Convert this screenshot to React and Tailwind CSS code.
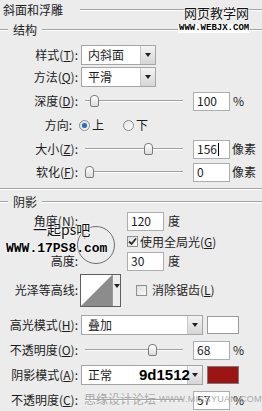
const font = "font-['Noto_Sans_CJK_SC','Noto_Sans',sans-serif]";

function Line({ className = "" }) {
  return <div className={`h-[2px] border-t border-[#a3a3a3] border-b border-b-white ${className}`} />;
}

function Lbl({ children, className = "" }) {
  return (
    <div className={`w-[78px] shrink-0 text-right leading-none ${className}`}>{children}</div>
  );
}

function Select({ text, w, children }) {
  return (
    <div className={`relative flex h-[20px] ${w} border border-[#a5a5a5] bg-white`}>
      <div className="flex flex-1 items-center pl-[6px] leading-none">{text}</div>
      <div className="flex w-[15px] items-center justify-center border-l border-[#c8c8c8] bg-gradient-to-b from-[#f4f4f4] to-[#d6d6d6]">
        <div className="h-0 w-0 border-x-[3px] border-t-[4px] border-x-transparent border-t-[#222]" />
      </div>
      {children}
    </div>
  );
}

function Input({ value, caret }) {
  return (
    <div className="flex h-[19px] w-[37px] items-center border border-[#abadb3] bg-white pl-[3px] leading-none">
      {value}
      {caret && <span className="ml-[1px] h-[13px] w-px bg-black" />}
    </div>
  );
}

function Slider({ thumb }) {
  return (
    <div className="relative h-[14px] w-[98px] shrink-0">
      <div className="absolute left-0 right-0 top-[6px] h-[2px] border-t border-[#a0a0a0] border-b border-b-white" />
      <div
        className={`absolute top-[1px] h-[12px] w-[9px] rounded-t-[4px] rounded-b-[2px] border border-[#7b7b7b] bg-gradient-to-b from-white to-[#dcdcdc] ${thumb}`}
      />
    </div>
  );
}

function Check({ checked }) {
  return (
    <div className="flex h-[11px] w-[11px] shrink-0 items-center justify-center border border-[#8e8f8f] bg-gradient-to-br from-[#dedede] to-[#fafafa]">
      {checked && (
        <svg width="9" height="9" viewBox="0 0 9 9">
          <path d="M1 4.5 L3.5 7 L8 1.5" fill="none" stroke="#2b2b2b" strokeWidth="1.8" />
        </svg>
      )}
    </div>
  );
}

function Radio({ on }) {
  return (
    <div className="flex h-[11px] w-[11px] shrink-0 items-center justify-center rounded-full border border-[#8a8a8a] bg-gradient-to-br from-[#e3e3e3] to-white">
      {on && <div className="h-[5px] w-[5px] rounded-full bg-[#2f6cae] shadow-[0_0_2px_#7fb3e6]" />}
    </div>
  );
}

export default function App() {
  return (
    <div className={`relative h-[411px] w-[262px] overflow-hidden bg-[#ececec] text-[12px] text-[#1c1c1c] ${font}`}>
      {/* 斜面和浮雕 */}
      <div className="flex h-[20px] items-center pl-[3px]">
        <span className="leading-none">斜面和浮雕</span>
        <Line className="ml-[17px] flex-1" />
      </div>

      {/* 结构 */}
      <div className="flex h-[20px] items-center">
        <Line className="w-[8px]" />
        <span className="px-[5px] leading-none">结构</span>
        <Line className="flex-1" />
      </div>
      <div className="h-[4px]" />

      <div className="flex h-[22px] items-center">
        <Lbl>样式(<u>T</u>):</Lbl>
        <div className="ml-[3px]"><Select text="内斜面" w="w-[75px]" /></div>
      </div>
      <div className="flex h-[22px] items-center">
        <Lbl>方法(<u>Q</u>):</Lbl>
        <div className="ml-[3px]"><Select text="平滑" w="w-[75px]" /></div>
      </div>
      <div className="flex h-[26px] items-center">
        <Lbl>深度(<u>D</u>):</Lbl>
        <div className="ml-[7px]"><Slider thumb="left-[5px]" /></div>
        <div className="ml-[10px]"><Input value="100" /></div>
        <span className="ml-[3px] leading-none">%</span>
      </div>
      <div className="flex h-[22px] items-center">
        <Lbl className="pr-[6px]">方向:</Lbl>
        <div className="ml-[1px]"><Radio on /></div>
        <span className="ml-[2px] leading-none">上</span>
        <div className="ml-[19px]"><Radio /></div>
        <span className="ml-[2px] leading-none">下</span>
      </div>
      <div className="flex h-[26px] items-center">
        <Lbl>大小(<u>Z</u>):</Lbl>
        <div className="ml-[7px]"><Slider thumb="left-[59px]" /></div>
        <div className="ml-[10px]"><Input value="156" caret /></div>
        <span className="ml-[2px] leading-none">像素</span>
      </div>
      <div className="flex h-[20px] items-center">
        <Lbl>软化(<u>F</u>):</Lbl>
        <div className="ml-[7px]"><Slider thumb="left-0" /></div>
        <div className="ml-[10px]"><Input value="0" /></div>
        <span className="ml-[2px] leading-none">像素</span>
      </div>

      <div className="h-[14px] pt-[6px]">
        <Line />
      </div>

      {/* 阴影 */}
      <div className="flex h-[12px] items-center">
        <Line className="w-[8px]" />
        <span className="px-[5px] leading-none">阴影</span>
        <Line className="flex-1" />
      </div>
      <div className="h-[2px]" />

      <div className="flex h-[22px] items-center">
        <Lbl>角度(<u>N</u>):</Lbl>
        <div className="ml-[49px]"><Input value="120" /></div>
        <span className="ml-[4px] leading-none">度</span>
      </div>
      <div className="flex h-[19px] items-center pl-[127px]">
        <Check checked />
        <span className="ml-[2px] leading-none">使用全局光(<u>G</u>)</span>
      </div>
      <div className="flex h-[20px] items-center">
        <Lbl>高度:</Lbl>
        <div className="ml-[49px]"><Input value="30" /></div>
        <span className="ml-[4px] leading-none">度</span>
      </div>

      <div className="flex h-[38px] items-center">
        <Lbl>光泽等高线:</Lbl>
        <div className="ml-[2px] flex h-[33px] w-[41px] border border-[#5f5f5f] bg-white">
          <svg width="31" height="31" viewBox="0 0 31 31" className="shrink-0">
            <polygon points="0,31 31,0 31,31" fill="#8c8c8c" />
          </svg>
          <div className="flex flex-1 justify-center border-l border-[#9a9a9a] bg-[#eeeeee] pt-[9px]">
            <div className="h-0 w-0 border-x-[3px] border-t-[4px] border-x-transparent border-t-[#222]" />
          </div>
        </div>
        <div className="ml-[15px]"><Check /></div>
        <span className="ml-[5px] leading-none">消除锯齿(<u>L</u>)</span>
      </div>

      <div className="flex h-[31px] items-center">
        <Lbl>高光模式(<u>H</u>):</Lbl>
        <div className="ml-[3px]"><Select text="叠加" w="w-[122px]" /></div>
        <div className="ml-[4px] h-[18px] w-[32px] border border-[#9a9a9a] bg-white" />
      </div>
      <div className="flex h-[20px] items-center">
        <Lbl>不透明度(<u>O</u>):</Lbl>
        <div className="ml-[7px]"><Slider thumb="left-[63px]" /></div>
        <div className="ml-[10px]"><Input value="68" /></div>
        <span className="ml-[3px] leading-none">%</span>
      </div>
      <div className="flex h-[30px] items-center">
        <Lbl>阴影模式(<u>A</u>):</Lbl>
        <div className="ml-[3px]">
          <Select text="正常" w="w-[122px]">
            <span className="absolute left-[57px] top-[-1px] font-['Liberation_Sans',sans-serif] text-[15px] font-bold leading-[20px] text-black">
              9d1512
            </span>
          </Select>
        </div>
        <div className="ml-[4px] h-[18px] w-[32px] border border-[#7a7a7a] bg-[#9d1512]" />
      </div>
      <div className="relative flex h-[20px] items-center">
        <Lbl>不透明度(<u>C</u>):</Lbl>
        <div className="ml-[7px]"><Slider thumb="left-[55px] opacity-0" /></div>
        <div className="ml-[10px]"><Input value="57" /></div>
        <span className="ml-[3px] leading-none">%</span>
        <div className="absolute left-[84px] top-[3px] flex items-center whitespace-nowrap leading-none text-[#a9a9a9]">
          <span className="text-[12px]">思缘设计论坛</span>
          <span className="ml-[3px] font-['Liberation_Sans',sans-serif] text-[9px] tracking-[0.3px]">WWW.MISSYUAN.COM</span>
        </div>
      </div>

      {/* angle dial */}
      <div className="absolute left-[77px] top-[226px] h-[38px] w-[38px] rounded-full border border-[#6d6d6d]">
        <span className="absolute left-[4px] top-[4px] text-[10px] leading-none text-[#555]">+</span>
      </div>

      {/* watermarks */}
      <div className="absolute left-[184px] top-[6px] text-[13px] leading-none text-[#111] [text-shadow:0_0_2px_#fff,0_0_2px_#fff]">
        网页教学网
      </div>
      <div className="absolute left-[178px] top-[24px] bg-white px-[1px] font-['Liberation_Mono',monospace] text-[9px] font-bold leading-[9px] text-black">
        WWW.WEBJX.COM
      </div>
      <div className="absolute left-[33px] top-[222px] text-[14px] leading-none text-[#111] [text-shadow:0_0_2px_#fff,0_0_2px_#fff,0_0_2px_#fff]">
        一起ps吧
      </div>
      <div className="absolute left-[6px] top-[242px] font-['Liberation_Mono',monospace] text-[13px] font-bold leading-none text-black [text-shadow:0_0_2px_#fff,0_0_2px_#fff,0_0_2px_#fff]">
        WWW.17PS8.com
      </div>
    </div>
  );
}
